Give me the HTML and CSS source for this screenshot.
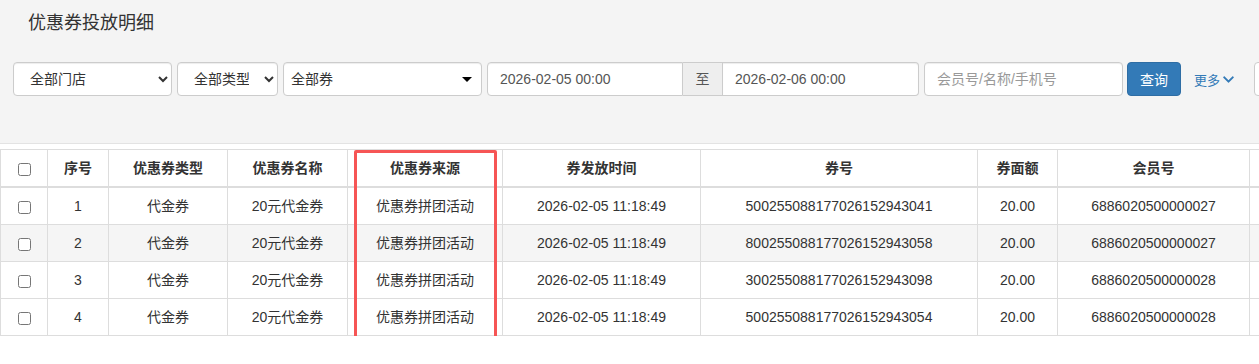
FILE: index.html
```html
<!DOCTYPE html>
<html lang="zh-CN">
<head>
<meta charset="UTF-8">
<meta name="viewport" content="width=device-width, initial-scale=1.0">
<link rel="stylesheet" href="styles.css">
</head>
<body>
  <div class="top-panel">
    <h3 class="page-title">优惠券投放明细</h3>
    <div class="filter-bar">
      <select class="form-control sel-shop"><option>全部门店</option></select>
      <select class="form-control sel-type"><option>全部类型</option></select>
      <div class="form-control chosen-box">
        <span>全部券</span>
        <b class="caret"></b>
      </div>
      <div class="date-range">
        <input class="form-control date-input date-from" value="2026-02-05 00:00">
        <span class="range-addon">至</span>
        <input class="form-control date-input date-to" value="2026-02-06 00:00">
      </div>
      <input class="form-control member-input" placeholder="会员号/名称/手机号">
      <button class="btn-query">查询</button>
      <a class="more-link">更多
        <svg class="chevron" viewBox="0 0 448 512"><path d="M207 381.5L12.7 187.1c-9.4-9.4-9.4-24.6 0-33.9l22.7-22.7c9.4-9.4 24.5-9.4 33.9 0L224 284.5l154.7-154c9.4-9.3 24.5-9.3 33.9 0l22.7 22.7c9.4 9.4 9.4 24.6 0 33.9L241 381.5c-9.4 9.4-24.6 9.4-34 0z"/></svg>
      </a>
      <div class="next-ctrl"></div>
    </div>
  </div>

  <div class="table-wrap">
    <table class="data-table">
      <colgroup>
        <col style="width:47px">
        <col style="width:61px">
        <col style="width:119px">
        <col style="width:120px">
        <col style="width:155px">
        <col style="width:198px">
        <col style="width:277px">
        <col style="width:80px">
        <col style="width:192px">
        <col style="width:150px">
      </colgroup>
      <thead>
        <tr>
          <th><input type="checkbox"></th>
          <th>序号</th>
          <th>优惠券类型</th>
          <th>优惠券名称</th>
          <th>优惠券来源</th>
          <th>券发放时间</th>
          <th>券号</th>
          <th>券面额</th>
          <th>会员号</th>
          <th></th>
        </tr>
      </thead>
      <tbody>
        <tr>
          <td><input type="checkbox"></td>
          <td>1</td>
          <td>代金券</td>
          <td>20元代金券</td>
          <td>优惠券拼团活动</td>
          <td>2026-02-05 11:18:49</td>
          <td>500255088177026152943041</td>
          <td>20.00</td>
          <td>6886020500000027</td>
          <td></td>
        </tr>
        <tr class="row-alt">
          <td><input type="checkbox"></td>
          <td>2</td>
          <td>代金券</td>
          <td>20元代金券</td>
          <td>优惠券拼团活动</td>
          <td>2026-02-05 11:18:49</td>
          <td>800255088177026152943058</td>
          <td>20.00</td>
          <td>6886020500000027</td>
          <td></td>
        </tr>
        <tr>
          <td><input type="checkbox"></td>
          <td>3</td>
          <td>代金券</td>
          <td>20元代金券</td>
          <td>优惠券拼团活动</td>
          <td>2026-02-05 11:18:49</td>
          <td>300255088177026152943098</td>
          <td>20.00</td>
          <td>6886020500000028</td>
          <td></td>
        </tr>
        <tr>
          <td><input type="checkbox"></td>
          <td>4</td>
          <td>代金券</td>
          <td>20元代金券</td>
          <td>优惠券拼团活动</td>
          <td>2026-02-05 11:18:49</td>
          <td>500255088177026152943054</td>
          <td>20.00</td>
          <td>6886020500000028</td>
          <td></td>
        </tr>
      </tbody>
    </table>
    <div class="mark-box"></div>
  </div>
</body>
</html>
```

FILE: styles.css
```css
body {
  margin: 0;
  overflow: hidden;
  font-family: "Liberation Sans", "Noto Sans CJK SC", sans-serif;
  font-size: 14px;
  color: #333;
  background: #fff;
}

.top-panel {
  background: #f4f4f4;
  border-bottom: 1px solid #e3e3e3;
  padding: 13px 0 0 13px;
  height: 130px;
}

.page-title {
  margin: 0 0 29px 15px;
  font-size: 18px;
  font-weight: normal;
  line-height: 20px;
  color: #333;
}

.filter-bar {
  display: flex;
  align-items: center;
  gap: 5px;
  white-space: nowrap;
}

.filter-bar > * {
  flex-shrink: 0;
}

.form-control {
  box-sizing: border-box;
  height: 34px;
  padding: 6px 12px;
  border: 1px solid #ccc;
  border-radius: 4px;
  background: #fff;
  font-family: inherit;
  font-size: 14px;
  line-height: 20px;
  color: #555;
  box-shadow: inset 0 1px 1px rgba(0, 0, 0, 0.075);
  outline: none;
}

select.form-control {
  padding-left: 12px;
  color: #333;
}

.sel-shop {
  width: 159px;
}

.sel-type {
  width: 101px;
}

.chosen-box {
  width: 199px;
  display: flex;
  align-items: center;
  justify-content: space-between;
  padding: 6px 9px 6px 7px;
  color: #333;
}

.caret {
  width: 0;
  height: 0;
  border-top: 5px solid #000;
  border-left: 5px solid transparent;
  border-right: 5px solid transparent;
}

.date-range {
  display: flex;
}

.date-input {
  width: 196px;
}

.date-from {
  border-radius: 4px 0 0 4px;
}

.date-to {
  border-radius: 0 4px 4px 0;
  border-left: none;
}

.range-addon {
  box-sizing: border-box;
  width: 40px;
  height: 34px;
  line-height: 32px;
  text-align: center;
  background: #eee;
  border: 1px solid #ccc;
  border-left: none;
  color: #555;
}

.member-input {
  width: 199px;
}

.member-input::placeholder {
  color: #999;
}

.btn-query {
  box-sizing: border-box;
  width: 54px;
  height: 34px;
  margin-left: -1px;
  border: 1px solid #2e6da4;
  border-radius: 4px;
  background: #337ab7;
  color: #fff;
  font-family: inherit;
  font-size: 14px;
}

.more-link {
  padding: 0 8px;
  color: #337ab7;
  font-size: 13px;
  display: flex;
  align-items: center;
  gap: 3px;
}

.chevron {
  width: 11px;
  height: 13px;
  fill: #337ab7;
}

.next-ctrl {
  box-sizing: border-box;
  width: 60px;
  height: 34px;
  margin-left: 7px;
  border: 1px solid #ccc;
  border-radius: 4px;
  background: #fff;
}

.table-wrap {
  position: relative;
  margin-top: 5px;
}

.data-table {
  border-collapse: collapse;
  table-layout: fixed;
  width: 1399px;
}

.data-table th,
.data-table td {
  border: 1px solid #ddd;
  padding: 8px;
  line-height: 20px;
  height: 20px;
  text-align: center;
  white-space: nowrap;
  overflow: hidden;
}

.data-table thead th {
  border-bottom-width: 2px;
  font-weight: bold;
  color: #333;
}

.data-table input[type="checkbox"] {
  margin: 0;
  width: 13px;
  height: 13px;
  vertical-align: middle;
}

.row-alt td {
  background: #f5f5f5;
}

/* annotation around the source column */
.mark-box {
  position: absolute;
  left: 354px;
  top: 1px;
  width: 143px;
  height: 189px;
  box-sizing: border-box;
  border: 3px solid #f65555;
  border-radius: 2px;
}
```
